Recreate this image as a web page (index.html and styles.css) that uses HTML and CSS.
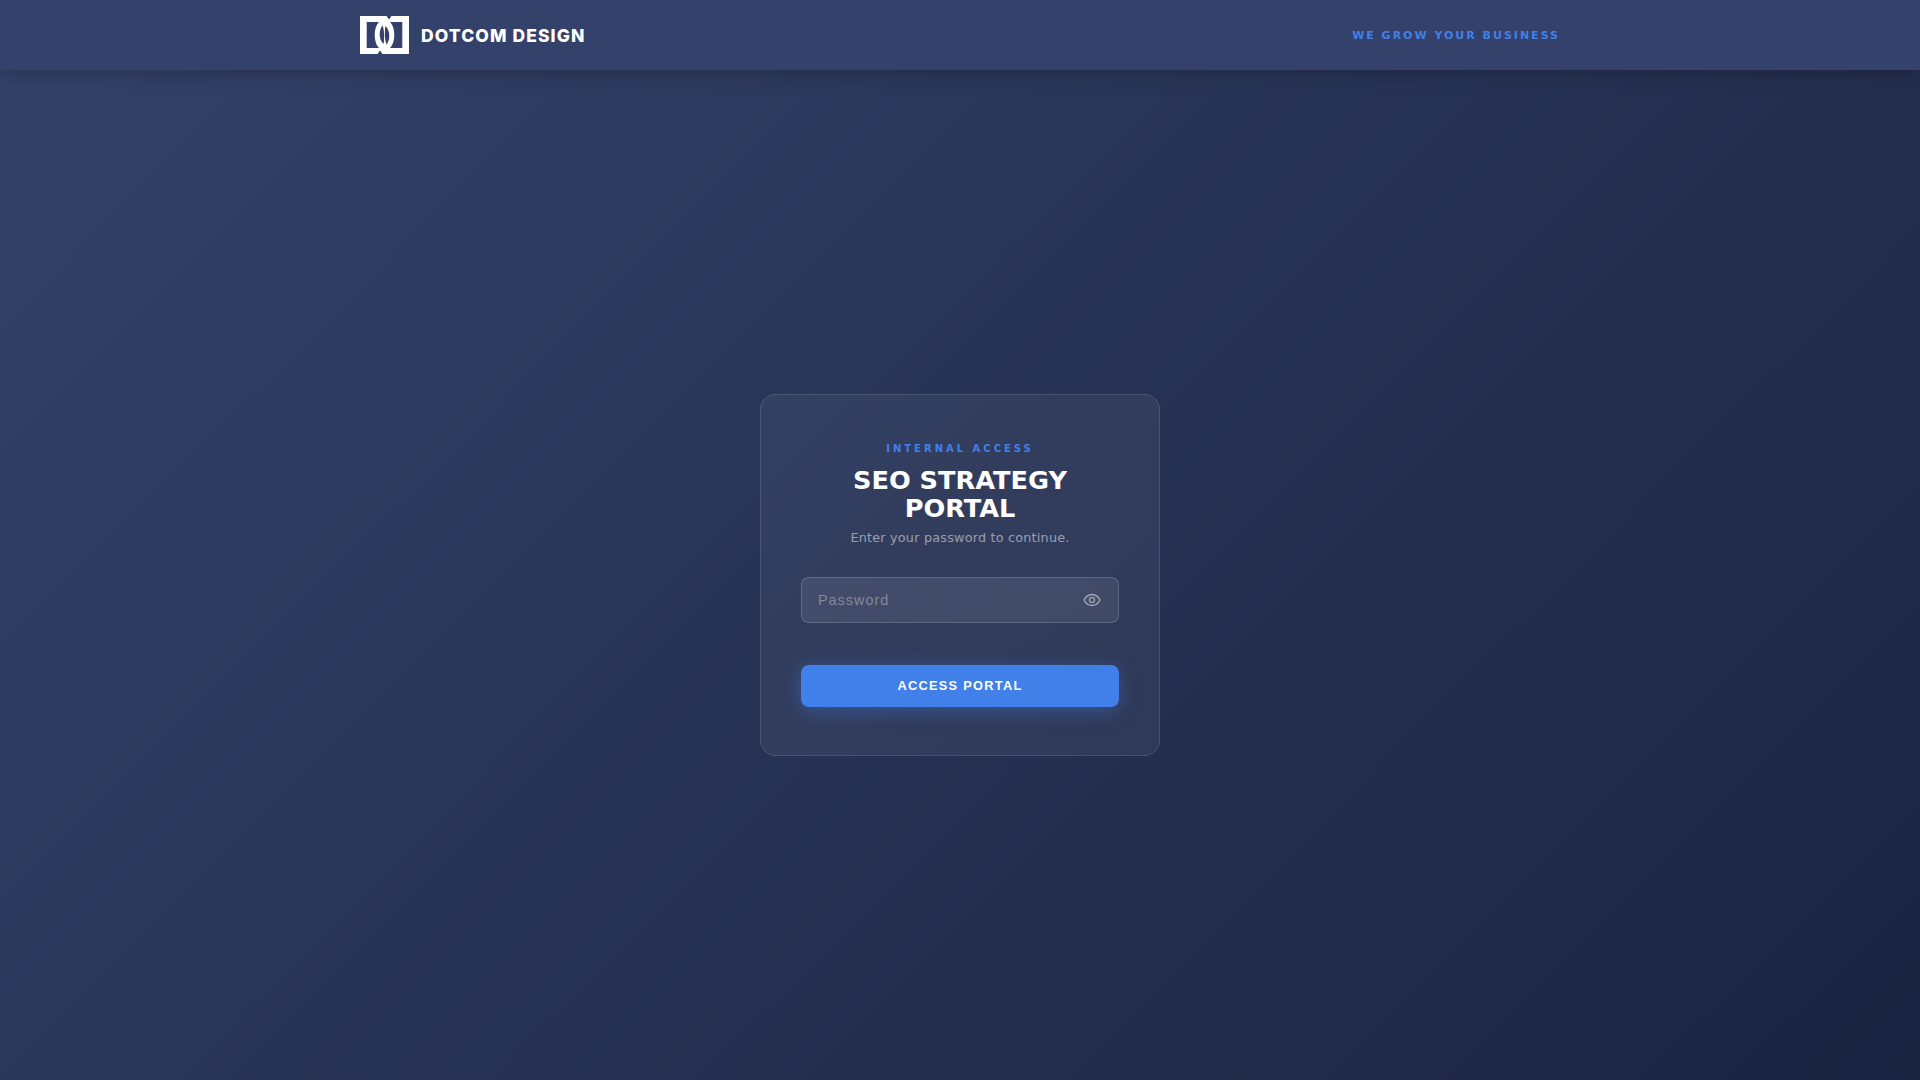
FILE: index.html
```html
<!DOCTYPE html>
<html lang="en">
<head>
<meta charset="utf-8">
<title>SEO Strategy Portal</title>
<link rel="stylesheet" href="styles.css">
</head>
<body>
<header class="topbar">
  <div class="topbar-inner">
    <div class="brand">
      <svg class="brand-mark" viewBox="0 0 49 38" aria-hidden="true">
        <rect class="mark-white" width="49" height="38"/>
        <path class="mark-dark" d="M6.700 6H19C16 9 14.700 14 14.700 19C14.700 24 16 29 19 32H6.700Z"/>
        <path class="mark-dark" d="M42.300 32H30C33 29 34.300 24 34.300 19C34.300 14 33 9 30 6H42.300Z"/>
        <path class="mark-dark" d="M22.500 9.500C20.500 12 19.700 15 19.700 18.500C19.700 22 21 25.500 23.500 28C24.500 24 24.500 14 22.500 9.500Z"/>
        <path class="mark-dark" d="M26.500 28.500C28.500 26 29.300 23 29.300 19.500C29.300 16 28 12.500 25.500 10C24.500 14 24.500 24 26.500 28.500Z"/>
        <path class="mark-dark" d="M26.500 0H31.500L29 3.500C28.200 2.300 27.400 1.200 26.500 0Z"/>
        <path class="mark-dark" d="M22.500 38H17.500L20 34.500C20.800 35.700 21.600 36.800 22.500 38Z"/>
      </svg>
      <span class="brand-name">DOTCOM DESIGN</span>
    </div>
    <span class="tagline">WE GROW YOUR BUSINESS</span>
  </div>
</header>
<main class="stage">
  <section class="card">
    <p class="eyebrow">INTERNAL ACCESS</p>
    <h1 class="title">SEO STRATEGY PORTAL</h1>
    <p class="subtitle">Enter your password to continue.</p>
    <form class="form">
      <div class="field">
        <input class="input" type="password" placeholder="Password">
        <svg class="eye" viewBox="0 0 24 24" aria-hidden="true">
          <path d="M2.500 12C4.500 7.800 8 5.500 12 5.500S19.500 7.800 21.500 12C19.500 16.200 16 18.500 12 18.500S4.500 16.200 2.500 12Z"/>
          <circle cx="12" cy="12" r="3"/>
        </svg>
      </div>
      <button class="submit" type="button">ACCESS PORTAL</button>
    </form>
  </section>
</main>
</body>
</html>
```

FILE: styles.css
```css
* { box-sizing: border-box; }
html, body { height: 100%; }
body {
  margin: 0;
  display: flex;
  flex-direction: column;
  min-height: 100vh;
  font-family: "DejaVu Sans", sans-serif;
  background: linear-gradient(135deg, #34426a 0%, #1a2340 100%);
}
.topbar {
  height: 70px;
  flex: none;
  background: #34416b;
  box-shadow: 0 2px 20px rgba(0, 0, 0, 0.25);
}
.topbar-inner {
  width: 1200px;
  height: 100%;
  margin: 0 auto;
  display: flex;
  align-items: center;
  justify-content: space-between;
}
.brand { display: flex; align-items: center; gap: 12px; }
.brand-mark { width: 49px; height: 38px; display: block; }
.mark-white { fill: #fff; }
.mark-dark { fill: #34416b; }
.brand-name {
  font-family: Inter, sans-serif;
  font-weight: 800;
  font-size: 17.5px;
  letter-spacing: 1.1px;
  color: #fff;
}
.tagline {
  font-size: 11px;
  font-weight: 700;
  letter-spacing: 2px;
  color: #4080e8;
}
.stage {
  flex: 1;
  display: flex;
  align-items: center;
  justify-content: center;
}
.card {
  width: 400px;
  height: 362px;
  padding: 47px 40px 40px;
  text-align: center;
  background: rgba(255, 255, 255, 0.05);
  border: 1px solid rgba(255, 255, 255, 0.12);
  border-radius: 16px;
}
.eyebrow {
  margin: 0 0 10px;
  font-size: 10px;
  line-height: 14px;
  font-weight: 700;
  letter-spacing: 3px;
  color: #4080e8;
}
.title {
  margin: 0 0 8px;
  font-size: 25.6px;
  line-height: 28px;
  font-weight: 700;
  color: #fff;
}
.subtitle {
  margin: 0 0 31px;
  font-size: 12.8px;
  line-height: 16px;
  letter-spacing: 0.2px;
  color: rgba(255, 255, 255, 0.5);
}
.form { display: flex; flex-direction: column; gap: 42px; }
.field { position: relative; }
.input {
  display: block;
  width: 100%;
  height: 46px;
  padding: 0 48px 0 16px;
  background: rgba(255, 255, 255, 0.08);
  border: 1px solid rgba(255, 255, 255, 0.18);
  border-radius: 8px;
  outline: none;
  font-family: "Liberation Sans", sans-serif;
  font-size: 14.4px;
  letter-spacing: 1px;
  color: #fff;
}
.input::placeholder { color: rgba(255, 255, 255, 0.35); opacity: 1; }
.eye {
  position: absolute;
  top: 13px;
  right: 17px;
  width: 20px;
  height: 20px;
  fill: none;
  stroke: rgba(255, 255, 255, 0.45);
  stroke-width: 2;
}
.submit {
  display: block;
  width: 100%;
  height: 42px;
  padding: 0 0 1px;
  border: 0;
  border-radius: 8px;
  background: #4080e8;
  box-shadow: 0 4px 20px rgba(64, 128, 232, 0.4);
  font-family: "Liberation Sans", sans-serif;
  font-size: 12.8px;
  font-weight: 700;
  letter-spacing: 1.28px;
  color: #fff;
}
```
